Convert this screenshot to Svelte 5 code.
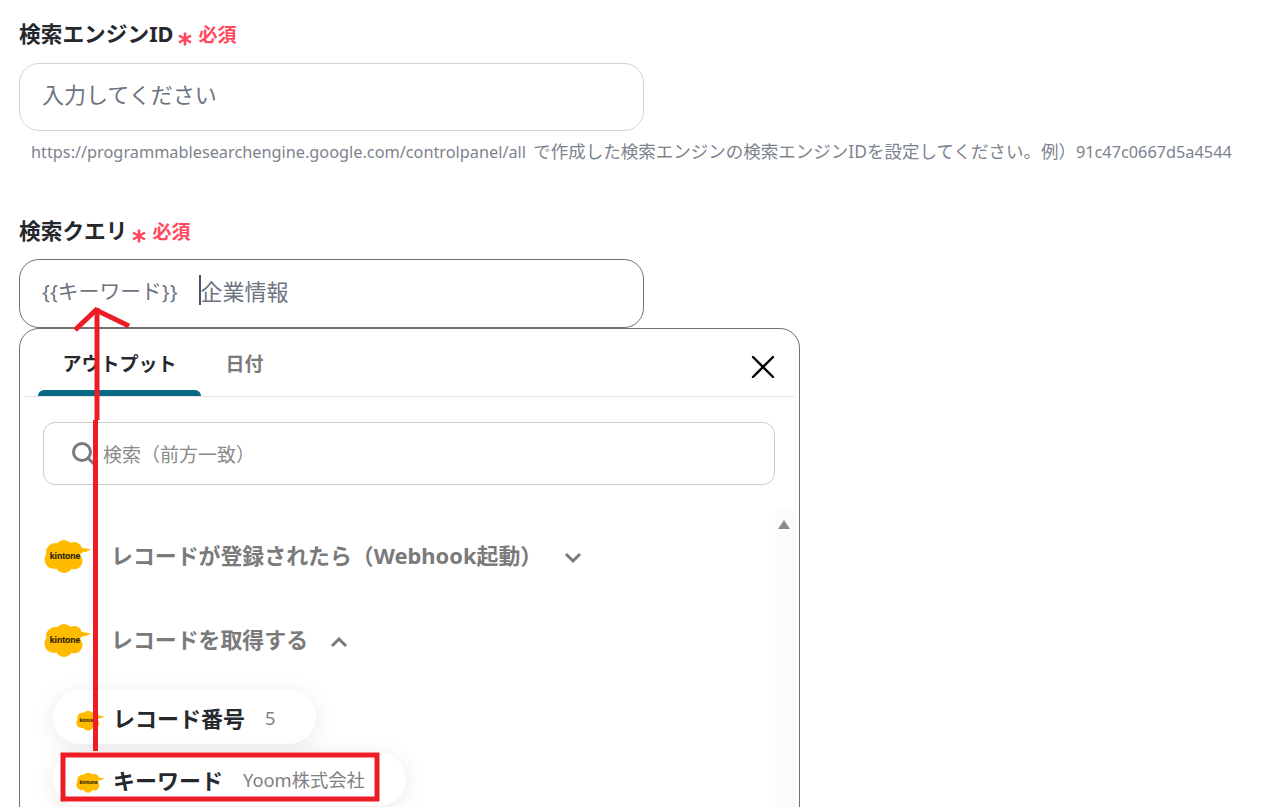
<script>
  const sections = [
    { title: 'レコードが登録されたら（Webhook起動）', open: false },
    { title: 'レコードを取得する', open: true }
  ];
  const items = [
    { name: 'レコード番号', value: '5' },
    { name: 'キーワード', value: 'Yoom株式会社' }
  ];
</script>

{#snippet logo(cls)}
  <svg class={cls} viewBox="0 0 48 34" aria-hidden="true">
    <g fill="#ffbb00">
      <circle cx="11" cy="12" r="9"/>
      <circle cx="20" cy="9" r="9"/>
      <circle cx="30" cy="10" r="8"/>
      <circle cx="10" cy="19.500" r="9.500"/>
      <circle cx="20" cy="24" r="9"/>
      <circle cx="30" cy="21" r="8.500"/>
      <circle cx="20" cy="17" r="11"/>
      <path d="M33 7L47.500 9.500Q42 12.500 36 13z"/>
    </g>
    <text x="21" y="18.500" text-anchor="middle" class="logo-text">kintone</text>
  </svg>
{/snippet}

{#snippet star()}
  <svg class="star" viewBox="0 0 14 14" aria-hidden="true"><path d="M7 0.500V13.500M1 3.500L13 10.500M13 3.500L1 10.500"/></svg>
{/snippet}

<div class="page">
  <section class="field first">
    <div class="label">検索エンジンID{@render star()}<span class="req">必須</span></div>
    <div class="input"><span class="placeholder">入力してください</span></div>
    <p class="help">https://programmablesearchengine.google.com/controlpanel/all <span class="cjk">で作成した検索エンジンの検索エンジンIDを設定してください。例）</span>91c47c0667d5a4544</p>
  </section>

  <section class="field second">
    <div class="label">検索クエリ{@render star()}<span class="req">必須</span></div>
    <div class="input active">
      <span class="token">{'{{キーワード}}'}</span><span class="caret"></span><span class="typed">企業情報</span>
    </div>
  </section>

  <div class="panel">
    <div class="tabs">
      <div class="tab selected">アウトプット</div>
      <div class="tab">日付</div>
      <svg class="close" viewBox="0 0 24 24" aria-hidden="true"><path d="M2 2l20 20M22 2L2 22"/></svg>
    </div>
    <div class="search">
      <svg class="lens" viewBox="0 0 26 26" aria-hidden="true"><circle cx="11" cy="11" r="8.500"/><path d="M17 17l7 7"/></svg>
      <span>検索（前方一致）</span>
    </div>
    <div class="scroll">
      <div class="list">
        {#each sections as s}
          <div class="section">
            {@render logo('logo')}
            <span class="section-title">{s.title}</span>
            <svg class="chev" viewBox="0 0 18 12" aria-hidden="true"><path d={s.open ? 'M2 10l7-7 7 7' : 'M2 2l7 7 7-7'}/></svg>
          </div>
        {/each}
        <div class="pills">
          {#each items as it}
            <div class="pill">
              {@render logo('logo small')}
              <span class="pill-name">{it.name}</span>
              <span class="pill-value">{it.value}</span>
            </div>
          {/each}
        </div>
      </div>
      <div class="track"><span class="up"></span></div>
    </div>
  </div>

  <svg class="annotation" viewBox="0 0 1261 807" aria-hidden="true">
    <path class="red" d="M97 308V420"/>
    <path class="red" d="M95.500 420V751"/>
    <path class="red" d="M75 330L96 310L129 326"/>
    <rect class="box" x="63" y="755" width="314" height="44"/>
  </svg>
</div>

<style>
  :global(body) { margin: 0; background: #fff; }
  .page {
    position: relative;
    width: 1261px;
    height: 807px;
    overflow: hidden;
    box-sizing: border-box;
    padding: 19px 0 0 19px;
    font-family: "Noto Sans", "Noto Sans CJK JP", sans-serif;
    color: #25282c;
  }
  .field.second { margin-top: 53px; }
  .label {
    display: flex;
    align-items: center;
    height: 30px;
    font-size: 21.700px;
    font-weight: 700;
    line-height: 30px;
  }
  .star {
    width: 14px;
    height: 14px;
    margin: 10px 6px 0 5px;
    fill: none;
    stroke: #ff4a5e;
    stroke-width: 2.600;
  }
  .req { color: #ff4a5e; font-size: 19px; font-weight: 700; margin-top: 2px; }
  .input {
    display: flex;
    align-items: center;
    box-sizing: border-box;
    width: 625px;
    height: 68px;
    margin-top: 14px;
    padding: 0 0 8px 22px;
    border: 1px solid #cfd5dd;
    border-radius: 20px;
    font-size: 22px;
    color: #6c7480;
  }
  .input.active { margin-top: 13px; height: 69px; padding-bottom: 7px; border-color: #717171; }
  .token { font-size: 20.800px; }
  .caret { width: 2px; height: 30px; background: #4b5563; margin-left: 21px; }
  .typed { color: #6c7480; }
  .help {
    margin: 9px 0 0 12px;
    font-size: 16.300px;
    line-height: 22px;
    color: #7c838d;
    white-space: nowrap;
  }
  .cjk { font-size: 17.500px; margin-left: 3px; }
  .panel {
    box-sizing: border-box;
    width: 781px;
    height: 520px;
    padding: 0 4px;
    border: 1px solid #717171;
    border-radius: 20px;
    background: #fff;
  }
  .tabs {
    display: flex;
    align-items: stretch;
    height: 67px;
    border-bottom: 1px solid #e4e4e4;
    padding-left: 14px;
  }
  .tab {
    display: flex;
    align-items: center;
    justify-content: center;
    box-sizing: border-box;
    font-size: 19px;
    font-weight: 700;
    color: #7a7a7a;
    width: 87px;
  }
  .tab.selected {
    position: relative;
    width: 163px;
    color: #25282c;
  }
  .tab.selected::after {
    content: "";
    position: absolute;
    left: 0;
    right: 0;
    bottom: 0;
    height: 6px;
    background: #066a84;
    border-radius: 6px 6px 0 0;
  }
  .close {
    width: 24px;
    height: 24px;
    margin: 26px 20px 0 auto;
    fill: none;
    stroke: #000;
    stroke-width: 2.400;
    stroke-linecap: round;
  }
  .search {
    display: flex;
    align-items: center;
    box-sizing: border-box;
    width: 732px;
    height: 63px;
    margin: 25px 0 0 19px;
    padding-left: 27px;
    border: 1px solid #cccccc;
    border-radius: 12px;
    font-size: 19px;
    color: #8a8a8a;
  }
  .lens {
    width: 26px;
    height: 26px;
    margin-right: 6px;
    fill: none;
    stroke: #7a7a7a;
    stroke-width: 3;
  }
  .scroll { display: flex; margin-top: 25px; height: 300px; }
  .list { flex: 1; min-width: 0; padding: 30px 0 0 20px; }
  .section {
    display: flex;
    align-items: center;
    height: 33px;
    margin-bottom: 51px;
    font-size: 21.900px;
    font-weight: 700;
    color: #7a7a7a;
  }
  .logo { width: 48px; height: 34px; flex: none; }
  .logo-text {
    font-family: "Liberation Sans", sans-serif;
    font-size: 8.600px;
    font-weight: 700;
    fill: #2a2000;
    stroke: #2a2000;
    stroke-width: 0.150;
  }
  .section-title { margin-left: 19px; padding-bottom: 4px; }
  .chev {
    width: 18px;
    height: 12px;
    margin: 2px 0 0 22px;
    fill: none;
    stroke: #7a7a7a;
    stroke-width: 3;
  }
  .pills {
    display: flex;
    flex-direction: column;
    align-items: flex-start;
    gap: 8px;
    margin: -18px 0 0 9px;
  }
  .pill {
    display: flex;
    align-items: center;
    height: 54px;
    padding: 0 41px 0 23px;
    border-radius: 27px;
    background: #fff;
    box-shadow: 0 4px 24px rgba(0, 0, 0, 0.09);
  }
  .logo.small { width: 29px; height: 22px; margin-top: 7px; }
  .pill-name { margin-left: 8px; font-size: 22px; font-weight: 700; color: #25282c; }
  .pill-value { margin-left: 20px; font-size: 18.300px; color: #808080; }
  .track {
    flex: none;
    width: 20px;
    height: 300px;
    background: #fbfbfb;
    position: relative;
  }
  .up {
    position: absolute;
    left: 3px;
    top: 10px;
    width: 0;
    height: 0;
    border-left: 6.500px solid transparent;
    border-right: 6.500px solid transparent;
    border-bottom: 9px solid #8a8a8a;
  }
  .annotation { position: absolute; inset: 0; width: 1261px; height: 807px; pointer-events: none; }
  .red { fill: none; stroke: #ee1c25; stroke-width: 5; }
  .box { fill: none; stroke: #ee1c25; stroke-width: 5; }
</style>
